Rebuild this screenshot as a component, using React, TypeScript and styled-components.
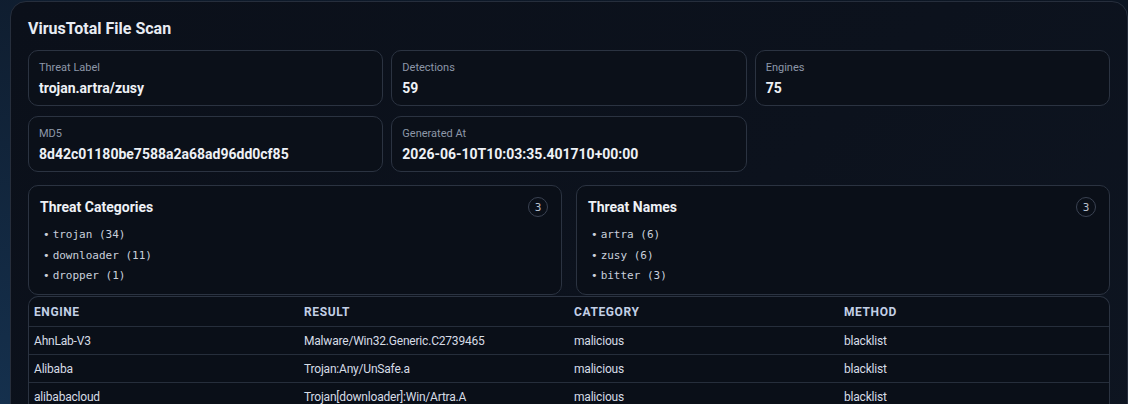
import styled, { createGlobalStyle } from 'styled-components';

const GlobalStyle = createGlobalStyle`
  html, body {
    margin: 0;
    padding: 0;
    background: radial-gradient(circle at 0% 100%, #15304d 0%, #0e1a2a 40%, #0c1522 100%);
    font-family: Roboto, 'Noto Sans', 'Liberation Sans', sans-serif;
    overflow: hidden;
  }
`;

const stats = [
  { label: 'Threat Label', value: 'trojan.artra/zusy' },
  { label: 'Detections', value: '59' },
  { label: 'Engines', value: '75' },
  { label: 'MD5', value: '8d42c01180be7588a2a68ad96dd0cf85' },
  { label: 'Generated At', value: '2026-06-10T10:03:35.401710+00:00' },
];

const lists = [
  { title: 'Threat Categories', items: ['trojan (34)', 'downloader (11)', 'dropper (1)'] },
  { title: 'Threat Names', items: ['artra (6)', 'zusy (6)', 'bitter (3)'] },
];

const columns = ['Engine', 'Result', 'Category', 'Method'];

const rows = [
  ['AhnLab-V3', 'Malware/Win32.Generic.C2739465', 'malicious', 'blacklist'],
  ['Alibaba', 'Trojan:Any/UnSafe.a', 'malicious', 'blacklist'],
  ['alibabacloud', 'Trojan[downloader]:Win/Artra.A', 'malicious', 'blacklist'],
];

const App = () => {
  return (
    <>
      <GlobalStyle />
      <Page>
        <Card>
          <Title>VirusTotal File Scan</Title>
          <StatGrid>
            {stats.map((s) => (
              <StatBox key={s.label}>
                <StatLabel>{s.label}</StatLabel>
                <StatValue>{s.value}</StatValue>
              </StatBox>
            ))}
          </StatGrid>
          <ListGrid>
            {lists.map((l) => (
              <ListBox key={l.title}>
                <ListHead>
                  <ListTitle>{l.title}</ListTitle>
                  <Badge>{l.items.length}</Badge>
                </ListHead>
                <List>
                  {l.items.map((e) => (
                    <Item key={e}>{e}</Item>
                  ))}
                </List>
              </ListBox>
            ))}
          </ListGrid>
          <TableWrap>
            <Table>
              <thead>
                <tr>
                  {columns.map((c) => (
                    <Th key={c}>{c}</Th>
                  ))}
                </tr>
              </thead>
              <tbody>
                {rows.map((r) => (
                  <tr key={r[0]}>
                    {r.map((c, i) => (
                      <Td key={i}>{c}</Td>
                    ))}
                  </tr>
                ))}
              </tbody>
            </Table>
          </TableWrap>
        </Card>
      </Page>
    </>
  );
};

const Page = styled.div`
  padding: 1px 0 0 10px;
  height: 404px;
  box-sizing: border-box;
`;

const Card = styled.div`
  width: 1118px;
  height: 460px;
  box-sizing: border-box;
  padding: 17px 17px 0;
  border: 1px solid #262e3c;
  border-radius: 16px;
  background: linear-gradient(135deg, #0b101a 0%, #0c121d 60%, #0e1521 100%);
`;

const Title = styled.h2`
  margin: 0 0 11px;
  font-size: 16px;
  line-height: 20px;
  font-weight: 700;
  color: #e8ecf3;
`;

const StatGrid = styled.div`
  display: grid;
  grid-template-columns: repeat(3, 1fr);
  gap: 10px 8px;
`;

const StatBox = styled.div`
  height: 56px;
  box-sizing: border-box;
  padding: 10px 10px;
  border: 1px solid #2b3341;
  border-radius: 10px;
  background: #0b1019;
`;

const StatLabel = styled.div`
  font-size: 11px;
  line-height: 14px;
  color: #8d97a8;
`;

const StatValue = styled.div`
  margin-top: 4px;
  font-size: 14px;
  line-height: 18px;
  font-weight: 700;
  color: #eef1f6;
`;

const ListGrid = styled.div`
  display: grid;
  grid-template-columns: 1fr 1fr;
  gap: 14px;
  margin-top: 13px;
`;

const ListBox = styled.div`
  height: 110px;
  box-sizing: border-box;
  padding: 11px 13px 0 11px;
  border: 1px solid #2b3341;
  border-radius: 10px;
  background: #0a0f18;
`;

const ListHead = styled.div`
  display: flex;
  align-items: center;
  justify-content: space-between;
`;

const ListTitle = styled.div`
  font-size: 14px;
  line-height: 20px;
  font-weight: 700;
  color: #eef1f6;
`;

const Badge = styled.span`
  width: 20px;
  height: 20px;
  box-sizing: border-box;
  border: 1px solid #3a4252;
  border-radius: 50%;
  display: flex;
  align-items: center;
  justify-content: center;
  font-size: 11px;
  color: #b7bfcc;
  font-family: 'DejaVu Sans Mono', monospace;
`;

const List = styled.ul`
  list-style: none;
  margin: 8px 0 0;
  padding: 0 0 0 3px;
`;

const Item = styled.li`
  font-family: 'DejaVu Sans Mono', 'Liberation Mono', monospace;
  font-size: 11px;
  line-height: 20.5px;
  color: #c9d0dc;
  &::before {
    content: '•';
    margin-right: 3px;
  }
`;

const TableWrap = styled.div`
  margin-top: 1px;
  border: 1px solid #2b3341;
  border-bottom: none;
  border-radius: 10px 10px 0 0;
  overflow: hidden;
  background: #0a0f18;
`;

const Table = styled.table`
  width: 100%;
  border-collapse: collapse;
  table-layout: fixed;
`;

const Th = styled.th`
  height: 29px;
  padding: 0 5px;
  text-align: left;
  text-transform: uppercase;
  font-size: 12px;
  font-weight: 700;
  letter-spacing: 0.6px;
  color: #c3d0e6;
  border-bottom: 1px solid #262e3b;
`;

const Td = styled.td`
  height: 27px;
  padding: 0 5px;
  font-size: 12px;
  color: #d6dce6;
  border-bottom: 1px solid #262e3b;
  letter-spacing: -0.2px;
`;

export default App;
